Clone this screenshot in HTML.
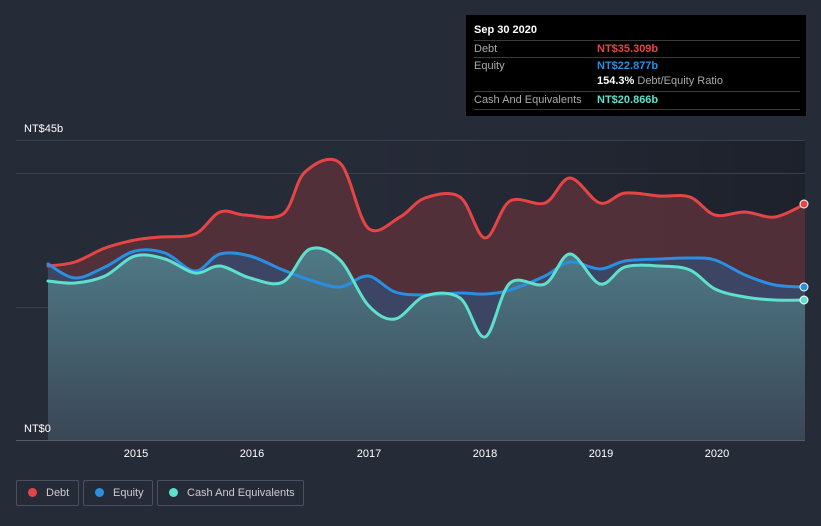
<!DOCTYPE html>
<html><head><style>
body{margin:0;width:821px;height:526px;background:#262b38;font-family:"Liberation Sans",sans-serif;overflow:hidden;position:relative}
.tt{position:absolute;left:466px;top:15px;width:340px;height:101px;background:#000;color:#fff;font-size:11px}
.tt .r{position:absolute;left:8px;right:6px;border-top:1px solid #3a3a3a;height:17px;line-height:17px}
.lab{color:#aaa}
.leg{position:absolute;top:480px;height:26px;border:1px solid #4a5060;border-radius:2px;color:#ccc;font-size:11px;line-height:24px;box-sizing:border-box;white-space:nowrap}
.leg i{display:inline-block;width:9px;height:9px;border-radius:50%;margin:0 9px 0 11px;vertical-align:-1px}
</style></head><body>
<svg width="821" height="526" style="position:absolute;left:0;top:0">
<defs>
<linearGradient id="bg" x1="0" x2="1" y1="0" y2="0"><stop offset="0" stop-color="#262b38"/><stop offset="1" stop-color="#1d212b"/></linearGradient>
<linearGradient id="cg" x1="0" x2="0" y1="0" y2="1"><stop offset="0" stop-color="#4f7a86"/><stop offset="1" stop-color="#3a4656"/></linearGradient>
</defs>
<rect x="370" y="140" width="435" height="300" fill="url(#bg)"/>
<g stroke="#3a404d" stroke-width="1"><line x1="16" y1="140.5" x2="805" y2="140.5"/><line x1="16" y1="173.5" x2="805" y2="173.5"/><line x1="16" y1="307.5" x2="805" y2="307.5"/><line x1="16" y1="440.5" x2="805" y2="440.5" stroke="#555b68"/></g>
<polygon class="s a" fill="#54303a" fill-opacity="0.95" points="48,266 75,262 105,248 135,240 160,237 195,234 220,212 245,215 283,214 305,172 340,163 368,228 400,217 425,198 460,197 485,238 510,201 545,203 570,178 600,203 625,193 660,196 690,197 715,215 745,212 775,217 805,204"/>
<polygon class="s a" fill="#3c4563" points="48,264 75,278 105,267 135,251 165,253 195,271 220,254 250,256 283,270 310,280 340,287 368,276 395,292 425,295 460,293 485,294 510,290 545,276 570,262 600,269 625,261 660,259 690,258 715,260 745,275 775,285 805,287"/>
<polygon class="s a" fill="url(#cg)" points="48,281 75,283 105,276 135,256 165,259 195,273 220,266 250,278 283,282 310,249 340,260 368,305 395,319 425,296 460,298 485,337 510,283 545,284 570,254 600,284 625,267 660,266 690,270 715,289 745,297 775,300 805,300"/>
<g fill="none" stroke-width="3" stroke-linejoin="round" stroke-linecap="round">
<polyline class="s" stroke="#e64545" points="48,266 75,262 105,248 135,240 160,237 195,234 220,212 245,215 283,214 305,172 340,163 368,228 400,217 425,198 460,197 485,238 510,201 545,203 570,178 600,203 625,193 660,196 690,197 715,215 745,212 775,217 805,204"/>
<polyline class="s" stroke="#2a8fe0" points="48,264 75,278 105,267 135,251 165,253 195,271 220,254 250,256 283,270 310,280 340,287 368,276 395,292 425,295 460,293 485,294 510,290 545,276 570,262 600,269 625,261 660,259 690,258 715,260 745,275 775,285 805,287"/>
<polyline class="s" stroke="#5ee0cc" points="48,281 75,283 105,276 135,256 165,259 195,273 220,266 250,278 283,282 310,249 340,260 368,305 395,319 425,296 460,298 485,337 510,283 545,284 570,254 600,284 625,267 660,266 690,270 715,289 745,297 775,300 805,300"/>
</g>
<circle cx="804" cy="204" r="4" fill="#e64545" stroke="#fff" stroke-width="1"/>
<circle cx="804" cy="287" r="4" fill="#2a8fe0" stroke="#fff" stroke-width="1"/>
<circle cx="804" cy="300" r="4" fill="#5ee0cc" stroke="#fff" stroke-width="1"/>
<g fill="#fff" font-size="11" font-family="Liberation Sans"><text x="24" y="132">NT$45b</text><text x="24" y="432">NT$0</text>
<g text-anchor="middle"><text x="136" y="457">2015</text><text x="252" y="457">2016</text><text x="369" y="457">2017</text><text x="485" y="457">2018</text><text x="601" y="457">2019</text><text x="717" y="457">2020</text></g></g>
</svg>
<div class="tt">
<div style="position:absolute;left:8px;top:9px;font-weight:bold">Sep 30 2020</div>
<div class="r" style="top:25px"><span class="lab">Debt</span><span style="position:absolute;left:123px;color:#e64545;font-weight:bold">NT$35.309b</span></div>
<div class="r" style="top:42px"><span class="lab">Equity</span><span style="position:absolute;left:123px;color:#2a8fe0;font-weight:bold">NT$22.877b</span></div>
<div style="position:absolute;left:131px;top:60px"><b>154.3%</b> <span class="lab">Debt/Equity Ratio</span></div>
<div class="r" style="top:76px;border-bottom:1px solid #3a3a3a"><span class="lab">Cash And Equivalents</span><span style="position:absolute;left:123px;color:#5ee0cc;font-weight:bold">NT$20.866b</span></div>
</div>
<div class="leg" style="left:16px;width:63px"><i style="background:#e64545"></i>Debt</div>
<div class="leg" style="left:83px;width:70px"><i style="background:#2a8fe0"></i>Equity</div>
<div class="leg" style="left:157px;width:147px"><i style="background:#5ee0cc"></i>Cash And Equivalents</div>
<script>
document.querySelectorAll('.s').forEach(function(el){
 var p=el.getAttribute('points').trim().split(/\s+/).map(function(s){return s.split(',').map(Number)});
 var d='M'+p[0][0]+','+p[0][1];
 for(var i=0;i<p.length-1;i++){
  var p0=p[i-1]||p[i],p1=p[i],p2=p[i+1],p3=p[i+2]||p2,t=6;
  d+=' C'+(p1[0]+(p2[0]-p0[0])/t)+','+(p1[1]+(p2[1]-p0[1])/t)+' '+(p2[0]-(p3[0]-p1[0])/t)+','+(p2[1]-(p3[1]-p1[1])/t)+' '+p2[0]+','+p2[1];
 }
 if(el.classList.contains('a')) d+=' L805,440 L48,440 Z';
 var n=document.createElementNS('http://www.w3.org/2000/svg','path');
 for(var k=0;k<el.attributes.length;k++){var a=el.attributes[k];if(a.name!='points'&&a.name!='class')n.setAttribute(a.name,a.value);}
 n.setAttribute('d',d);el.parentNode.replaceChild(n,el);
});
</script>
</body></html>
